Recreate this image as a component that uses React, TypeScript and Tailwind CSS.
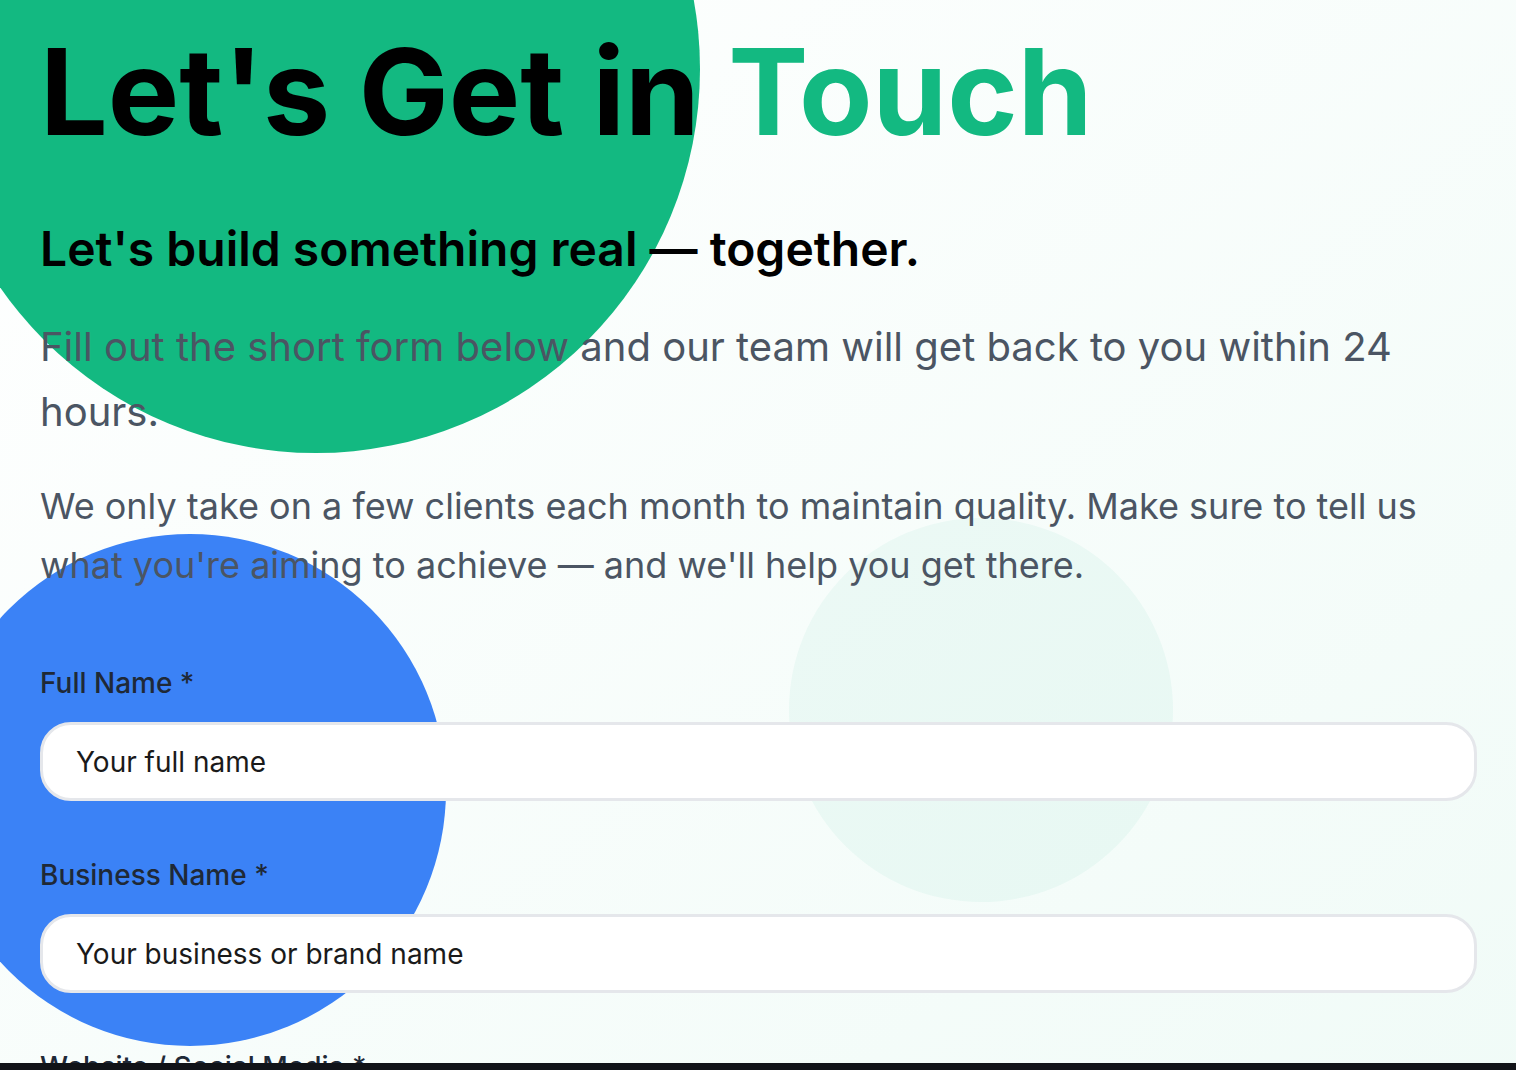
import { useState } from 'react';

const fields = [
  { id: 'fullName', label: 'Full Name *', placeholder: 'Your full name' },
  { id: 'business', label: 'Business Name *', placeholder: 'Your business or brand name' },
  { id: 'website', label: 'Website / Social Media *', placeholder: 'https://' },
];

export default function App() {
  const [values, setValues] = useState<Record<string, string>>({});

  return (
    <div className="relative min-h-screen w-full overflow-hidden bg-linear-to-br from-white to-[#f0fbf7]" style={{ fontFamily: 'Inter, "Noto Sans", sans-serif' }}>
      {/* decorative blobs */}
      <div className="absolute left-[-68px] top-[-315px] h-[768px] w-[768px] rounded-full bg-[#13b981]" />
      <div className="absolute left-[-66px] top-[534px] h-[512px] w-[512px] rounded-full bg-[#3b82f6]" />
      <div className="absolute left-[789px] top-[518px] h-[384px] w-[384px] rounded-full bg-[#13b981]/[0.05]" />

      <div className="relative z-10 pl-10 pr-[39px] pt-8">
        <h1 className="text-[120px] font-bold leading-none text-black">
          Let's Get in <span className="text-[#13b981]">Touch</span>
        </h1>
        <h2 className="mt-[73px] text-5xl font-semibold leading-none text-black">
          Let's build something real — together.
        </h2>
        <p className="mt-[41px] text-[40px] leading-[65px] text-[#4b5563]">
          Fill out the short form below and our team will get back to you within 24 hours.
        </p>
        <p className="mt-[33px] text-4xl leading-[58.5px] text-[#4b5563]">
          We only take on a few clients each month to maintain quality. Make sure to tell us what you're aiming to achieve — and we'll help you get there.
        </p>

        <form className="mt-[70px] flex flex-col gap-[55px]" onSubmit={e => e.preventDefault()}>
          {fields.map(f => (
            <div key={f.id} className="flex flex-col gap-[19px]">
              <label htmlFor={f.id} className="text-[28px] font-medium leading-[39px] text-[#1f2937]">
                {f.label}
              </label>
              <input
                id={f.id}
                value={values[f.id] || ''}
                onChange={e => setValues({ ...values, [f.id]: e.target.value })}
                placeholder={f.placeholder}
                className="h-[79px] w-full rounded-[31px] border-[3px] border-[#e5e7eb] bg-white px-[33px] text-[28px] text-[#1a1a1a] outline-none placeholder:text-[#1a1a1a]"
              />
            </div>
          ))}
        </form>
      </div>

      <div className="fixed bottom-0 left-0 right-0 z-20 h-[7px] bg-[#111318]" />
    </div>
  );
}
